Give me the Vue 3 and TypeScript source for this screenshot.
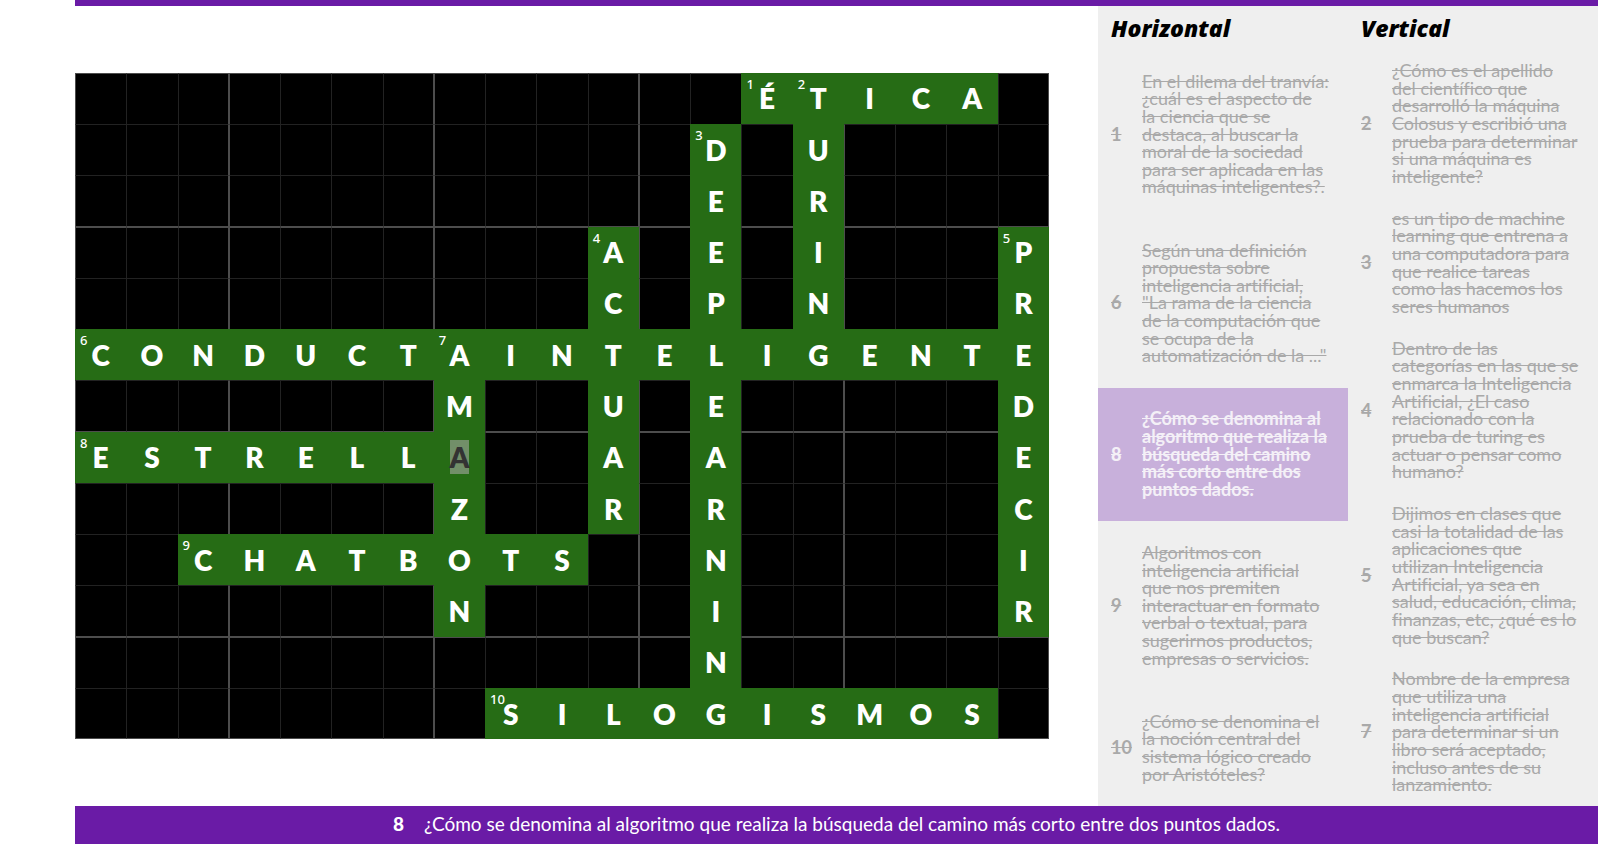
<script setup lang="ts">
import { computed, onMounted, ref } from 'vue'

interface Entry {
  id: number
  row: number
  col: number
  down: boolean
  answer: string
  clue: string
}

interface Cell {
  key: string
  row: number
  col: number
  letter: string
  mark: number | null
}

const ROWS = 13
const COLS = 19

const entries: Entry[] = [
  { id: 1, row: 0, col: 13, down: false, answer: 'ÉTICA', clue: 'En el dilema del tranvía:\n¿cuál es el aspecto de\nla ciencia que se\ndestaca, al buscar la\nmoral de la sociedad\npara ser aplicada en las\nmáquinas inteligentes?.' },
  { id: 6, row: 5, col: 0, down: false, answer: 'CONDUCTAINTELIGENTE', clue: 'Según una definición\npropuesta sobre\ninteligencia artificial,\n"La rama de la ciencia\nde la computación que\nse ocupa de la\nautomatización de la ..."' },
  { id: 8, row: 7, col: 0, down: false, answer: 'ESTRELLA', clue: '¿Cómo se denomina al\nalgoritmo que realiza la\nbúsqueda del camino\nmás corto entre dos\npuntos dados.' },
  { id: 9, row: 9, col: 2, down: false, answer: 'CHATBOTS', clue: 'Algoritmos con\ninteligencia artificial\nque nos premiten\ninteractuar en formato\nverbal o textual, para\nsugerirnos productos,\nempresas o servicios.' },
  { id: 10, row: 12, col: 8, down: false, answer: 'SILOGISMOS', clue: '¿Cómo se denomina el\nla noción central del\nsistema lógico creado\npor Aristóteles?' },
  { id: 2, row: 0, col: 14, down: true, answer: 'TURING', clue: '¿Cómo es el apellido\ndel científico que\ndesarrolló la máquina\nColosus y escribió una\nprueba para determinar\nsi una máquina es\ninteligente?' },
  { id: 3, row: 1, col: 12, down: true, answer: 'DEEPLEARNING', clue: 'es un tipo de machine\nlearning que entrena a\nuna computadora para\nque realice tareas\ncomo las hacemos los\nseres humanos' },
  { id: 4, row: 3, col: 10, down: true, answer: 'ACTUAR', clue: 'Dentro de las\ncategorías en las que se\nenmarca la Inteligencia\nArtificial, ¿El caso\nrelacionado con la\nprueba de turing es\nactuar o pensar como\nhumano?' },
  { id: 5, row: 3, col: 18, down: true, answer: 'PREDECIR', clue: 'Dijimos en clases que\ncasi la totalidad de las\naplicaciones que\nutilizan Inteligencia\nArtificial, ya sea en\nsalud, educación, clima,\nfinanzas, etc, ¿qué es lo\nque buscan?' },
  { id: 7, row: 5, col: 7, down: true, answer: 'AMAZON', clue: 'Nombre de la empresa\nque utiliza una\ninteligencia artificial\npara determinar si un\nlibro será aceptado,\nincluso antes de su\nlanzamiento.' },
]

const groups = [
  { title: 'Horizontal', items: entries.filter((e) => !e.down) },
  { title: 'Vertical', items: entries.filter((e) => e.down) },
]

const grid: Cell[] = []
for (let row = 0; row < ROWS; row++) {
  for (let col = 0; col < COLS; col++) {
    grid.push({ key: `${row}-${col}`, row, col, letter: '', mark: null })
  }
}
for (const e of entries) {
  Array.from(e.answer).forEach((letter, i) => {
    const cell = grid[(e.row + (e.down ? i : 0)) * COLS + e.col + (e.down ? 0 : i)]
    cell.letter = letter
    if (i === 0) cell.mark = e.id
  })
}
const open = new Set(grid.filter((c) => c.letter).map((c) => c.key))
const cells = ref(grid)

const activeId = ref(8)
const active = computed(() => entries.find((e) => e.id === activeId.value)!)
const board = ref<HTMLElement | null>(null)

function cellClass(c: Cell) {
  return {
    filled: open.has(c.key),
    'block-left': c.col % 4 === 3 || c.col === 0,
    'block-right': c.col % 4 === 2 || c.col === COLS - 1,
    'block-top': c.row % 4 === 3 || c.row === 0,
    'block-bottom': c.row % 4 === 2 || c.row === ROWS - 1,
  }
}

onMounted(() => {
  const field = board.value?.querySelector<HTMLInputElement>('[data-cell="7-7"]')
  field?.focus()
  field?.select()
})
</script>

<template>
  <div class="page">
    <div class="topbar"></div>
    <main class="game">
      <section class="stage" aria-label="Crucigrama">
        <div ref="board" class="board">
          <div v-for="c in cells" :key="c.key" class="cell" :class="cellClass(c)">
            <span v-if="c.mark" class="mark">{{ c.mark }}</span>
            <input
              v-if="open.has(c.key)"
              v-model="c.letter"
              class="letter"
              type="text"
              maxlength="1"
              autocomplete="off"
              :data-cell="c.key"
              :aria-label="`Fila ${c.row + 1}, columna ${c.col + 1}`"
            />
          </div>
        </div>
      </section>
      <aside class="clues">
        <section v-for="g in groups" :key="g.title" class="group">
          <h2 class="title">{{ g.title }}</h2>
          <ul class="list">
            <li v-for="e in g.items" :key="e.id" class="item">
              <button type="button" class="clue" :class="{ current: e.id === activeId }" @click="activeId = e.id">
                <span class="num">{{ e.id }}</span>
                <span class="text">{{ e.clue }}</span>
              </button>
            </li>
          </ul>
        </section>
      </aside>
    </main>
    <footer class="footer">
      <strong class="footer-num">{{ active.id }}</strong>
      <span>{{ active.clue.replace(/\n/g, ' ') }}</span>
    </footer>
  </div>
</template>

<style>
body {
  margin: 0;
  background: #fff;
}
</style>

<style scoped>
.page {
  display: grid;
  grid-template-rows: 6px 1fr 38px;
  box-sizing: border-box;
  min-height: 100vh;
  padding: 0 7px 4px 75px;
  font-family: Lato, 'Open Sans', sans-serif;
  font-variant-ligatures: no-common-ligatures;
}

.topbar {
  background: #6a1ba6;
}

.game {
  display: grid;
  grid-template-columns: minmax(0, 1fr) 500px;
}

.stage {
  display: flex;
  align-items: center;
  padding-right: 49px;
}

.board {
  display: grid;
  flex: 1;
  grid-template-columns: repeat(19, minmax(0, 1fr));
  grid-template-rows: repeat(13, minmax(0, 1fr));
  aspect-ratio: 19 / 13;
}

.cell {
  position: relative;
  display: flex;
  box-sizing: border-box;
  background: #000;
  border: 0 solid #222;
  border-width: 1px 0 0 1px;
}

.block-left {
  border-left-color: #4d4d4d;
}

.block-top {
  border-top-color: #4d4d4d;
}

.block-right {
  border-right: 1px solid #4d4d4d;
}

.block-bottom {
  border-bottom: 1px solid #4d4d4d;
}

.cell.filled {
  background: #266c15;
  border: 0;
}

.mark {
  position: absolute;
  top: 4px;
  left: 5px;
  color: #fff;
  font-family: 'Noto Sans', sans-serif;
  font-size: 13px;
  font-weight: 500;
  line-height: 14px;
}

.letter {
  width: 100%;
  height: 100%;
  min-width: 0;
  box-sizing: border-box;
  padding: 0;
  border: 0;
  outline: 0;
  background: transparent;
  color: #fff;
  caret-color: transparent;
  font: 800 28px Lato, 'Open Sans', sans-serif;
  text-align: center;
}

.letter::selection {
  background: #728f69;
  color: #333;
}

.clues {
  display: grid;
  grid-template-columns: 1fr 1fr;
  background: #efefef;
}

.group {
  display: flex;
  flex-direction: column;
}

.title {
  margin: 0;
  padding: 0 13px;
  color: #000;
  font-family: 'Open Sans', 'Noto Sans', sans-serif;
  font-size: 23px;
  font-style: italic;
  font-weight: 800;
  line-height: 44px;
}

.list {
  display: flex;
  flex: 1;
  flex-direction: column;
  margin: 0;
  padding: 0;
  list-style: none;
}

.item {
  display: flex;
  flex: 1 1 auto;
}

.clue {
  display: grid;
  flex: 1;
  grid-template-columns: 31px 1fr;
  align-items: center;
  padding: 0 0 0 13px;
  border: 0;
  background: transparent;
  color: #a9a9a9;
  font-family: inherit;
  font-size: 18px;
  font-variant-ligatures: inherit;
  line-height: 0.98;
  text-align: left;
  cursor: pointer;
}

.num {
  font-weight: 700;
  text-decoration: line-through;
}

.text {
  text-decoration: line-through;
  white-space: pre;
}

.current {
  background: #c8b0db;
  color: #f4f0f7;
  font-weight: 700;
}

.current .num {
  font-weight: 900;
}

.footer {
  display: flex;
  align-items: center;
  justify-content: center;
  gap: 20px;
  padding-bottom: 2px;
  background: #6a1ba6;
  color: #fff;
  font-size: 19px;
  line-height: 34px;
}

.footer-num {
  font-weight: 900;
}
</style>
